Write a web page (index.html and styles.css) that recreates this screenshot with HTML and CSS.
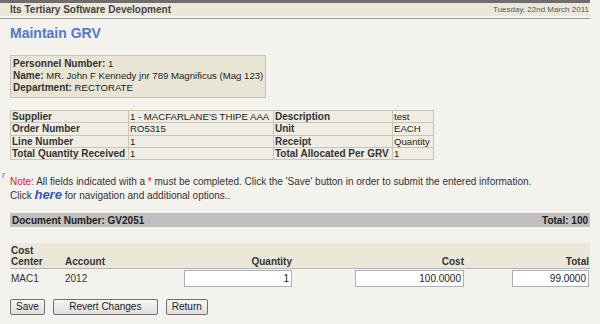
FILE: index.html
```html
<!DOCTYPE html>
<html>
<head>
<meta charset="utf-8">
<link rel="stylesheet" href="styles.css">
</head>
<body>
<div class="page">
  <div class="topwrap">
    <div class="topbar">
      <span class="brand">Its Tertiary Software Development</span>
      <span class="date">Tuesday, 22nd March 2011</span>
    </div>
  </div>
  <div class="content">
    <h1 class="title">Maintain GRV</h1>
    <div class="person">
      <div><b>Personnel Number:</b> 1</div>
      <div><b>Name:</b> MR. John F Kennedy jnr 789 Magnificus (Mag 123)</div>
      <div><b>Department:</b> RECTORATE</div>
    </div>
    <table class="info">
      <colgroup><col class="c1"><col class="c2"><col class="c3"><col class="c4"></colgroup>
      <tr><th>Supplier</th><td>1 - MACFARLANE'S THIPE AAA</td><th>Description</th><td>test</td></tr>
      <tr><th>Order Number</th><td>RO5315</td><th>Unit</th><td>EACH</td></tr>
      <tr><th>Line Number</th><td>1</td><th>Receipt</th><td>Quantity</td></tr>
      <tr><th>Total Quantity Received</th><td>1</td><th>Total Allocated Per GRV</th><td>1</td></tr>
    </table>
    <div class="note">
      <span class="stray">r</span>
      <div><span class="red">Note:</span> All fields indicated with a <span class="red">*</span> must be completed. Click the 'Save' button in order to submit the entered information.</div>
      <div>Click <a class="here">here</a> for navigation and additional options..</div>
    </div>
    <div class="docbar">
      <span>Document Number: GV2051</span>
      <span>Total: 100</span>
    </div>
    <table class="lines">
      <colgroup><col class="l1"><col class="l2"><col class="l3"><col class="l4"><col class="l5"></colgroup>
      <thead>
        <tr><th>Cost<br>Center</th><th>Account</th><th class="r">Quantity</th><th class="r">Cost</th><th class="r">Total</th></tr>
      </thead>
      <tbody>
        <tr><td>MAC1</td><td>2012</td><td class="r"><input class="inp iq" value="1"></td><td class="r"><input class="inp ic" value="100.0000"></td><td class="r"><input class="inp it" value="99.0000"></td></tr>
      </tbody>
    </table>
    <div class="buttons">
      <button class="btn">Save</button>
      <button class="btn wide">Revert Changes</button>
      <button class="btn">Return</button>
    </div>
  </div>
</div>
</body>
</html>
```

FILE: styles.css
```css
html, body {
  margin: 0;
  padding: 0;
  background: #f3f2ec;
  font-family: "Liberation Sans", Arial, sans-serif;
  font-size: 10px;
  color: #333;
}
.page {
  width: 590px;
}
.topwrap {
  border-top: 3px solid #6e6e6e;
  border-bottom: 1px solid #9b9b9b;
  padding-bottom: 2px;
}
.topbar {
  background: #ebe8da;
  height: 13px;
  display: flex;
  justify-content: space-between;
  align-items: center;
  padding: 0 1px 0 10px;
}
.brand {
  font-weight: bold;
  color: #444;
}
.date {
  font-size: 8px;
  color: #555;
}
.content {
  padding-left: 10px;
}
.title {
  margin: 6px 0 0 0;
  font-size: 14px;
  font-weight: bold;
  color: #5577cc;
  line-height: 17px;
}
.person {
  display: inline-block;
  margin-top: 13px;
  background: #e9e5d5;
  border: 1px solid #c9c5b5;
  padding: 2px 2px 3px 2px;
  line-height: 12px;
  font-size: 9.6px;
  color: #222;
}
.person b { color: #333; font-size: 10px; }
.info {
  margin-top: 12px;
  border-collapse: collapse;
  background: #efede4;
  table-layout: fixed;
  width: 423px;
}
.info th, .info td {
  border: 1px solid #c9c5b6;
  padding: 0 1px;
  line-height: 11.3px;
  text-align: left;
  white-space: nowrap;
  color: #222;
}
.info td { font-size: 9.6px; }
.info th { font-weight: bold; color: #333; }
.c1 { width: 118px; }
.c2 { width: 145px; }
.c3 { width: 119px; }
.c4 { width: 41px; }
.note {
  margin-top: 15px;
  line-height: 13px;
  position: relative;
}
.stray {
  position: absolute;
  left: -8px;
  top: -6px;
  color: #5577cc;
  font-style: italic;
  font-size: 9px;
}
.red { color: #e02020; }
.here {
  color: #3355cc;
  font-weight: bold;
  font-style: italic;
  font-size: 13px;
}
.docbar {
  margin-top: 11px;
  background: #bfbfbf;
  height: 14px;
  display: flex;
  justify-content: space-between;
  align-items: center;
  padding: 0 2px;
  font-weight: bold;
  color: #222;
}
.lines {
  margin-top: 16px;
  width: 580px;
  border-collapse: collapse;
  table-layout: fixed;
}
.lines th {
  background: #ebe8da;
  border-bottom: 1px solid #b5b5b5;
  text-align: left;
  vertical-align: bottom;
  font-weight: bold;
  color: #333;
  line-height: 11px;
  padding: 2px 1px 1px 1px;
}
.lines td {
  padding: 1px 1px;
  color: #333;
}
.lines .r { text-align: right; }
.l1 { width: 54px; }
.l2 { width: 60px; }
.l3 { width: 169px; }
.l4 { width: 172px; }
.l5 { width: 125px; }
.inp {
  box-sizing: border-box;
  height: 17px;
  border: 1px solid #a8b2bf;
  background: #fff;
  text-align: right;
  font-family: "Liberation Sans", Arial, sans-serif;
  font-size: 10px;
  color: #222;
  padding: 0 2px;
  margin: 0;
}
.iq { width: 108px; }
.ic { width: 109px; }
.it { width: 77px; }
.buttons {
  margin-top: 11px;
  display: flex;
  gap: 8px;
}
.btn {
  height: 16px;
  padding: 0 5px;
  border: 1px solid #707070;
  border-radius: 2px;
  background: linear-gradient(#f6f6f6, #dedede);
  font-family: "Liberation Sans", Arial, sans-serif;
  font-size: 10px;
  color: #222;
  line-height: 14px;
}
.wide { width: 105px; }
```
